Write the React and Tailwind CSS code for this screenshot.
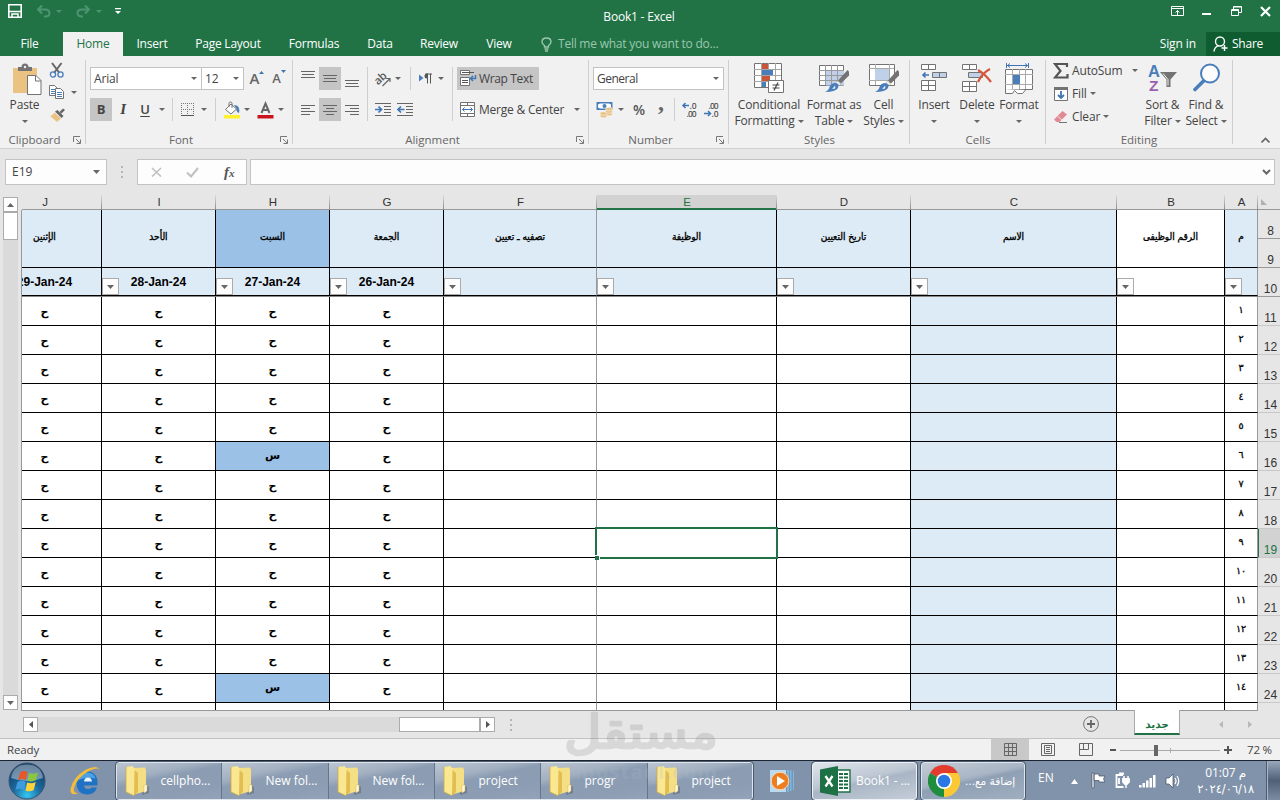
import React from 'react';
import clsx from 'clsx';

const Arrow = ({ className }) => (
  <svg width="6" height="3" viewBox="0 0 6 3" className={clsx('shrink-0', className || 'text-[#666]')}>
    <path d="M0 0h6L3 3z" fill="currentColor" />
  </svg>
);

const Sep = ({ className }) => <div className={clsx('w-px shrink-0 bg-[#cfcfcf]', className)} />;

const Slot = ({ className, children }) => (
  <div className={clsx('flex shrink-0 items-center justify-center', className)}>{children}</div>
);

/* ---------- small icons ---------- */

const Lines = ({ rows, y = 0 }) => (
  <svg width="14" height="16" viewBox="0 0 14 16" fill="#666">
    {rows.map(([x, w], i) => (
      <rect key={i} x={x} y={y + i * 3} width={w} height="1" />
    ))}
  </svg>
);

const LEFT = [[0, 14], [0, 9], [0, 14], [0, 9]];
const CENTER = [[0, 14], [3, 8], [0, 14], [3, 8]];
const RIGHT = [[0, 14], [5, 9], [0, 14], [5, 9]];
const THREE = [[0, 14], [1, 12], [0, 14]];

const PasteIcon = () => (
  <svg width="30" height="32" viewBox="0 0 30 32">
    <path d="M1 5h24v25H1z" fill="#eac282" />
    <path d="M6 8V4h3.500q0-3.500 3.500-3.500t3.500 3.500H20v4z" fill="#737373" />
    <circle cx="13" cy="4" r="1.200" fill="#f1f1f1" />
    <path d="M15.500 12.500h8.500l5 5v14H15.500z" fill="#fff" stroke="#737373" />
    <path d="M23.500 12.500v5.500H29" fill="none" stroke="#737373" />
  </svg>
);

const CutIcon = () => (
  <svg width="16" height="17" viewBox="0 0 16 17" fill="none">
    <path d="M3 1l7.500 10M12.500 1L5 11" stroke="#666" strokeWidth="2" />
    <circle cx="4" cy="12.500" r="2.600" stroke="#4a7ebb" strokeWidth="1.300" />
    <circle cx="11.500" cy="12.500" r="2.600" stroke="#4a7ebb" strokeWidth="1.300" />
  </svg>
);

const CopyIcon = () => (
  <svg width="16" height="15" viewBox="0 0 16 15" fill="#fff" stroke="#737373">
    <path d="M.5.5h5l3 3v7h-8z" />
    <path d="M2 4.500h4M2 6.500h4M2 8.500h4" stroke="#4a7ebb" />
    <path d="M6.500 3.500h5l3 3v7h-8z" />
    <path d="M8 7.500h5M8 9.500h5M8 11.500h5" stroke="#4a7ebb" />
  </svg>
);

const BrushIcon = () => (
  <svg width="17" height="15" viewBox="0 0 17 15">
    <path d="M10.500 4L14 .5 16 2l-3.500 3.500z" fill="#666" />
    <path d="M6 3.500L8.500 2l6 6-2 2z" fill="#666" />
    <path d="M5.500 4.500l6.500 6L8 14 1 8q3-1 4.500-3.500z" fill="#eac282" />
  </svg>
);

const BordersIcon = () => (
  <svg width="14" height="14" viewBox="0 0 14 14" fill="none" stroke="#777">
    <path d="M.5 0v12M6.500 0v12M12.500 0v12M0 .5h13M0 6.500h13" strokeDasharray="1 1" />
    <path d="M0 12.500h13" stroke="#555" />
  </svg>
);

const FillIcon = () => (
  <svg width="18" height="18" viewBox="0 0 18 18">
    <path d="M11 4q6.500 0 5 8-2.500-.5-3-5z" fill="#4a7ebb" />
    <path d="M2.500 8.500L8 3l5.500 5L8 13z" fill="#fff" stroke="#737373" />
    <path d="M6 6V2.500Q6 1 7.500 1T9 2.500V7" fill="none" stroke="#737373" />
    <path d="M1 14h16v3.500H1z" fill="#fff12b" />
  </svg>
);

const FontColorIcon = () => (
  <svg width="17" height="18" viewBox="0 0 17 18">
    <path d="M4.500 12L8.500 2.500 12.500 12M6 9h5" fill="none" stroke="#666" strokeWidth="2" />
    <path d="M.5 14h16v3.500H.5z" fill="#c9141c" />
  </svg>
);

const OrientationIcon = () => (
  <svg width="17" height="16" viewBox="0 0 17 16" className="overflow-visible">
    <text x="0" y="11" fontSize="11" fontWeight="600" fontFamily="Open Sans" fill="#5a5a5a" transform="rotate(-42 6 9)">ab</text>
    <path d="M7.500 15L14.500 8M11 7.500h4V11" fill="none" stroke="#666" strokeWidth="1.200" />
  </svg>
);

const ParagraphIcon = () => (
  <svg width="14" height="12" viewBox="0 0 14 12">
    <path d="M0 1.500L4.500 5 0 8.500z" fill="#4a7ebb" />
    <path d="M8.500 1v9.500M11.500 1v9.500M6.500 1H13" stroke="#555" fill="none" />
    <path d="M9 .5H8a2.500 2.500 0 0 0 0 5h1z" fill="#555" />
  </svg>
);

const IndentIcon = ({ flip }) => (
  <svg width="17" height="14" viewBox="0 0 17 14">
    <path d="M0 .5h16M9 3.500h7M9 6.500h7M9 9.500h7M0 12.500h16" stroke="#666" />
    {flip ? (
      <path d="M7.500 6.500H1.500M4 3.500l-3 3 3 3" fill="none" stroke="#3f74b5" strokeWidth="1.700" />
    ) : (
      <path d="M0 6.500h6M3.500 3.500l3 3-3 3" fill="none" stroke="#3f74b5" strokeWidth="1.700" />
    )}
  </svg>
);

const WrapIcon = () => (
  <svg width="17" height="17" viewBox="0 0 17 17" fill="none">
    <path d="M.5.500h9v4h-9zM.5 7.500h9v8h-9z" fill="#fff" stroke="#737373" />
    <path d="M2 2.500h12M2 10.500h6M2 12.500h6" stroke="#555" />
    <path d="M15.500 5v3.500h-4.500M13 6l-2.500 2.500L13 11" stroke="#3f74b5" strokeWidth="1.500" />
  </svg>
);

const MergeIcon = () => (
  <svg width="16" height="16" viewBox="0 0 16 16" fill="#fff" stroke="#737373">
    <path d="M.5.500h14v14H.5zM.5 3.500h14M.5 11.500h14M7.500.500v3M7.500 11.500v3" />
    <path d="M2.500 7.500h10M4.500 5.500l-2 2 2 2M10.500 5.500l2 2-2 2" fill="none" stroke="#3f74b5" />
  </svg>
);

const MoneyIcon = () => (
  <svg width="18" height="17" viewBox="0 0 18 17">
    <path d="M.5 1h16v8H.5z" fill="#4a7ebb" />
    <path d="M2 3.500L4 2.500h9l2 1v3l-2 1H4l-2-1z" fill="#fff" />
    <circle cx="8.500" cy="5" r="2" fill="#4a7ebb" />
    <g fill="#eac282" stroke="#f1f1f1" strokeWidth=".6">
      <ellipse cx="13" cy="13" rx="3.500" ry="1.800" />
      <ellipse cx="13" cy="10.500" rx="3.500" ry="1.800" />
      <ellipse cx="13" cy="8" rx="3.500" ry="1.800" />
      <ellipse cx="7.500" cy="15" rx="3.500" ry="1.800" />
      <ellipse cx="7.500" cy="12.500" rx="3.500" ry="1.800" />
    </g>
  </svg>
);

const DecimalIcon = ({ less }) => (
  <svg width="17" height="18" viewBox="0 0 17 18" fontFamily="Open Sans" fontSize="8.500" fontWeight="600" fill="#555" className="overflow-visible">
    <text x={less ? 4.5 : 7.500} y="8" textLength={less ? 10 : 7}>{less ? '.00' : '.0'}</text>
    <text x={less ? 7.500 : 4.5} y="16" textLength={less ? 7 : 10}>{less ? '.0' : '.00'}</text>
    {less ? (
      <path d="M0 12.500h6M4 10l2.500 2.500L4 15" fill="none" stroke="#3f74b5" strokeWidth="1.500" />
    ) : (
      <path d="M7 4.500H1M3.500 2L1 4.500 3.500 7" fill="none" stroke="#3f74b5" strokeWidth="1.500" />
    )}
  </svg>
);

/* ---------- large icons ---------- */

const ConditionalIcon = () => (
  <svg width="31" height="31" viewBox="0 0 31 31">
    <path d="M.5.500h27v24H.5z" fill="#fff" stroke="#737373" />
    <path d="M7.500 0v24M14.500 0v24M21.500 0v24M0 6.500h27M0 12.500h27M0 18.500h27" stroke="#a5a5a5" />
    <path d="M8 1h6v5H8zM8 13h8v5H8z" fill="#c8563c" />
    <path d="M8 7h11v5H8zM8 19h4v5H8z" fill="#4a7ebb" />
    <path d="M14.500 17.500h15v12h-15z" fill="#fff" stroke="#737373" />
    <path d="M18.500 22h7M18.500 25h7M24 19.500l-4 8" stroke="#444" strokeWidth="1.200" />
  </svg>
);

const Brush = () => (
  <g>
    <path d="M28.500 7L30 8.500v4L22 20.500l-3-3z" fill="#737373" />
    <path d="M18.500 18l3 3-1 1.500-3.500-3z" fill="#fff" stroke="#8a8a8a" strokeWidth=".5" />
    <path d="M16.500 20q4 1 2.500 5-2.500 4-13 4 4-2 4.500-5 1.500-4 6-4z" fill="#4a7ebb" />
    <path d="M13 25.500q2-1 3-3 1 2-.5 3.500z" fill="#e8eef6" />
  </g>
);

const FormatTableIcon = () => (
  <svg width="30" height="30" viewBox="0 0 30 30">
    <path d="M.5 2.500h24v20H.5z" fill="#fff" stroke="#737373" />
    <path d="M7 7.500h18v15H7z" fill="#bfd0e8" />
    <path d="M6.500 2v20M12.500 2v20M18.500 2v20M0 7.500h24M0 12.500h24M0 17.500h24" stroke="#999" />
    <Brush />
  </svg>
);

const CellStylesIcon = () => (
  <svg width="30" height="30" viewBox="0 0 30 30">
    <path d="M.5 1.500h25v21H.5z" fill="#fff" stroke="#737373" />
    <path d="M6.500 1v21M20.500 1v21M0 5.500h25M0 17.500h25" stroke="#aaa" />
    <path d="M6 6h14v11H6z" fill="#bfd0e8" />
    <Brush />
  </svg>
);

const InsertIcon = () => (
  <svg width="28" height="30" viewBox="0 0 28 30" fill="#fff" stroke="#737373">
    <path d="M1.500 1.500h14v5h-14zM8.500 1.500v5M1.500 17.500h14v10h-14zM8.500 17.500v10M1.500 22.500h14" />
    <path d="M12.500 9.500h14v5h-14zM19.500 9.500v5" fill="#bfd0e8" />
    <path d="M9 12H3M5.500 9.500L3 12l2.500 2.500" fill="none" stroke="#3f74b5" strokeWidth="1.600" />
  </svg>
);

const DeleteIcon = () => (
  <svg width="30" height="30" viewBox="0 0 30 30" fill="#fff" stroke="#737373">
    <path d="M.5 1.500h14v5H.5zM7.500 1.500v5M.5 18.500h14v10H.5zM7.500 18.500v10M.5 23.500h14" />
    <path d="M6.500 9.500h14v5h-14z" fill="#bfd0e8" />
    <path d="M16 7q7 4 13 12M28 6q-8 4-12 13" fill="none" stroke="#d3583c" strokeWidth="2.200" />
  </svg>
);

const FormatIcon = () => (
  <svg width="29" height="32" viewBox="0 0 29 32">
    <path d="M1.500 0v5M23.500 0v5M2 2.500h21M5 .5L2.500 2.500 5 4.500M20 .5l2.500 2L20 4.500" fill="none" stroke="#3f74b5" />
    <path d="M.5 6.500h27v20H.5z" fill="#fff" stroke="#737373" />
    <path d="M7.500 6v20M14.500 6v20M20.500 6v20M0 11.500h28M0 21.500h28" stroke="#aaa" />
    <path d="M8 12h7v9H8z" fill="#4a7ebb" />
    <path d="M.5 26v4.500h7l2-3 3 3h5l3-3.500" fill="#fff" stroke="#737373" />
  </svg>
);

const SortIcon = () => (
  <svg width="31" height="32" viewBox="0 0 31 32" fontFamily="Liberation Sans" fontWeight="bold" fontSize="16.500" className="overflow-visible">
    <text x="1" y="14" fill="#4a7ebb">A</text>
    <text x="2" y="28" fill="#9a5fae" fontSize="15.500">Z</text>
    <path d="M13 9h17l-6.500 7.500V24h-4v-7.500z" fill="#737373" />
    <path d="M16 10.500l5 6v6" fill="none" stroke="#f1f1f1" />
  </svg>
);

const FindIcon = () => (
  <svg width="29" height="30" viewBox="0 0 29 30" fill="none">
    <path d="M11.500 18L3 26.500" stroke="#4a7ebb" strokeWidth="3.600" strokeLinecap="round" />
    <circle cx="18" cy="10.500" r="9" fill="#fdfdfd" stroke="#4a7ebb" strokeWidth="2" />
  </svg>
);

const EraserIcon = () => (
  <svg width="15" height="14" viewBox="0 0 15 14">
    <path d="M6 12.500h8" stroke="#737373" />
    <path d="M1 9.500L9.500 1l4.500 3.500L6.500 12h-3z" fill="#e28a94" />
    <path d="M4.500 6l4.500 4" stroke="#f6dcdf" />
  </svg>
);

/* ---------- ribbon ---------- */

const Launcher = () => (
  <svg width="8" height="8" viewBox="0 0 8 8" fill="none" stroke="#777">
    <path d="M.5 6V.5H7M3 3l4 4M7.500 3.500v4h-4" />
  </svg>
);

const Group = ({ width, label, labelWidth, launcher, children }) => (
  <div className={clsx('flex shrink-0', width)}>
    <div className="flex flex-1 flex-col min-w-0">
      <div className="flex h-[76px]">{children}</div>
      <div className="flex h-4 items-center justify-between pr-1">
        <span className={clsx('shrink-0 text-center text-[11.5px] tracking-normal text-[#666]', labelWidth)}>{label}</span>
        {launcher && <Launcher />}
      </div>
    </div>
    <Sep className="my-1" />
  </div>
);

const BigButton = ({ width, icon, lines, arrow }) => (
  <div className={clsx('flex shrink-0 flex-col items-center whitespace-nowrap', width)}>
    <div className="flex h-[41px] items-start pt-[7px]">{icon}</div>
    <div className="h-4 leading-4">{lines[0]}</div>
    <div className="flex h-4 items-center gap-[3px] leading-4">
      {lines[1]}
      {arrow && <Arrow />}
    </div>
  </div>
);

const Combo = ({ width, children }) => (
  <div className={clsx('flex h-[23px] shrink-0 items-center justify-between border border-[#c3c3c3] bg-white pl-[3px] pr-1', width)}>
    <span>{children}</span>
    <Arrow />
  </div>
);

const Ribbon = () => (
  <div className="flex h-[93px] shrink-0 border-b border-[#d0d0d0] bg-[#f1f1f1] text-[12px] tracking-[-0.15px] text-[#444]">
    <Group width="w-[86px]" label="Clipboard" labelWidth="w-[69px]" launcher>
      <BigButton width="w-[49px]" icon={<div className="pl-[5px]"><PasteIcon /></div>} lines={['Paste', '']} arrow />
      <div className="flex flex-col pt-[3px]">
        <div className="flex h-[22px] items-center"><CutIcon /></div>
        <div className="flex h-[23px] items-center gap-[6px]"><CopyIcon /><Arrow /></div>
        <div className="flex h-[22px] items-center"><BrushIcon /></div>
      </div>
    </Group>

    <Group width="w-[207px]" label="Font" labelWidth="w-[190px]" launcher>
      <div className="flex flex-col gap-2 pl-1 pt-[11px]">
        <div className="flex h-[23px] items-center">
          <Combo width="w-[112px]">Arial</Combo>
          <Combo width="-ml-px w-[43px]">12</Combo>
          <Slot className="ml-[4px] w-[18px] items-start gap-0">
            <span className="text-[15px] font-semibold leading-[23px] text-[#666]">A</span>
            <svg width="5" height="3" className="mt-[4px]"><path d="M0 3h5L2.500 0z" fill="#3f74b5" /></svg>
          </Slot>
          <Slot className="ml-[5px] w-[16px] items-start">
            <span className="text-[13px] font-semibold leading-[25px] text-[#666]">A</span>
            <svg width="5" height="3" className="mt-[4px]"><path d="M0 0h5L2.500 3z" fill="#3f74b5" /></svg>
          </Slot>
        </div>
        <div className="flex h-[23px] items-center">
          <Slot className="h-[23px] w-[22px] bg-[#c5c5c5] text-[13px] font-bold">B</Slot>
          <Slot className="w-[22px] font-['Liberation_Serif',serif] text-[15px] font-bold italic">I</Slot>
          <Slot className="w-[22px] text-[13px] font-semibold underline underline-offset-2">U</Slot>
          <Slot className="w-[11px]"><Arrow /></Slot>
          <Sep className="ml-[5px] h-[23px]" />
          <Slot className="ml-[6px] w-[18px]"><BordersIcon /></Slot>
          <Slot className="w-[14px]"><Arrow /></Slot>
          <Sep className="ml-[4px] h-[23px]" />
          <Slot className="ml-[6px] w-[20px]"><FillIcon /></Slot>
          <Slot className="w-[10px]"><Arrow /></Slot>
          <Slot className="ml-[3px] w-[20px]"><FontColorIcon /></Slot>
          <Slot className="w-[12px]"><Arrow /></Slot>
        </div>
      </div>
    </Group>

    <Group width="w-[296px]" label="Alignment" labelWidth="w-[279px]" launcher>
      <div className="flex pl-1 pt-[11px]">
        <div className="grid h-[54px] grid-cols-[22px_22px_22px] grid-rows-[23px_23px] gap-y-2">
          <Slot><Lines rows={THREE} y={0} /></Slot>
          <Slot className="bg-[#c5c5c5]"><Lines rows={THREE} y={4} /></Slot>
          <Slot><Lines rows={THREE} y={9} /></Slot>
          <Slot><Lines rows={LEFT} y={3} /></Slot>
          <Slot className="bg-[#c5c5c5]"><Lines rows={CENTER} y={3} /></Slot>
          <Slot><Lines rows={RIGHT} y={3} /></Slot>
        </div>
        <Sep className="ml-1 h-[54px]" />
        <div className="flex w-[84px] flex-col gap-2">
          <div className="flex h-[23px] items-center">
            <Slot className="ml-[4px] w-[22px]"><OrientationIcon /></Slot>
            <Slot className="w-[7px]"><Arrow /></Slot>
            <Sep className="ml-[9px] h-[23px]" />
            <Slot className="ml-[4px] w-[22px]"><ParagraphIcon /></Slot>
            <Slot className="w-[8px]"><Arrow /></Slot>
          </div>
          <div className="flex h-[23px] items-center">
            <Slot className="ml-[4px] w-[22px]"><IndentIcon /></Slot>
            <Slot className="w-[22px]"><IndentIcon flip /></Slot>
          </div>
        </div>
        <Sep className="h-[54px]" />
        <div className="ml-1 flex flex-col gap-2 whitespace-nowrap">
          <div className="flex h-[23px] w-[82px] items-center gap-[2px] bg-[#c5c5c5] pl-[3px] tracking-[-0.35px]"><WrapIcon />Wrap Text</div>
          <div className="flex h-[23px] items-center pl-[3px]"><MergeIcon /><span className="ml-[3px] w-[95px] tracking-[-0.22px]">Merge &amp; Center</span><Arrow /></div>
        </div>
      </div>
    </Group>

    <Group width="w-[140px]" label="Number" labelWidth="w-[123px]" launcher>
      <div className="flex flex-col gap-2 pl-1 pt-[11px]">
        <Combo width="w-[131px] tracking-[-0.5px]">General</Combo>
        <div className="flex h-[23px] items-center">
          <Slot className="ml-[3px] w-[18px]"><MoneyIcon /></Slot>
          <Slot className="w-[13px]"><Arrow /></Slot>
          <Slot className="ml-[3px] w-[18px] text-[14px] font-semibold text-[#555]">%</Slot>
          <Slot className="ml-[3px] h-[23px] w-[20px] items-start font-['Liberation_Serif',serif] text-[24px] font-bold leading-[8px] text-[#666]">,</Slot>
          <Sep className="ml-[3px] h-[23px]" />
          <Slot className="ml-[7px] w-[17px]"><DecimalIcon /></Slot>
          <Slot className="ml-[5px] w-[17px]"><DecimalIcon less /></Slot>
        </div>
      </div>
    </Group>

    <Group width="w-[181px]" label="Styles" labelWidth="w-[181px]">
      <BigButton width="w-[80px]" icon={<ConditionalIcon />} lines={['Conditional', 'Formatting']} arrow />
      <BigButton width="w-[50px]" icon={<FormatTableIcon />} lines={['Format as', 'Table']} arrow />
      <BigButton width="w-[49px]" icon={<CellStylesIcon />} lines={['Cell', 'Styles']} arrow />
    </Group>

    <Group width="w-[136px]" label="Cells" labelWidth="w-[136px]">
      <BigButton width="w-[48px]" icon={<InsertIcon />} lines={['Insert', '']} arrow />
      <BigButton width="w-[38px]" icon={<DeleteIcon />} lines={['Delete', '']} arrow />
      <BigButton width="w-[46px]" icon={<FormatIcon />} lines={['Format', '']} arrow />
    </Group>

    <Group width="w-[187px]" label="Editing" labelWidth="w-[186px]">
      <div className="flex w-[94px] flex-col pl-[7px] pt-[3px]">
        <div className="flex h-[23px] items-center">
          <svg width="16" height="16" viewBox="0 0 16 16"><path d="M14 4V1H2l5.500 7L2 14.500h12.500V11" fill="none" stroke="#555" strokeWidth="2.200" /></svg>
          <span className="ml-[3px] w-[60px]">AutoSum</span>
          <Arrow />
        </div>
        <div className="flex h-[23px] items-center">
          <svg width="16" height="16" viewBox="0 0 16 16">
            <path d="M1.500 1.500h13v13h-13z" fill="#fff" stroke="#737373" />
            <path d="M1 1h14v3H1z" fill="#737373" />
            <path d="M8 5v7M5 9l3 3 3-3" fill="none" stroke="#3f74b5" strokeWidth="1.800" />
          </svg>
          <span className="ml-[3px] mr-[3px]">Fill</span>
          <Arrow />
        </div>
        <div className="flex h-[23px] items-center"><EraserIcon /><span className="ml-[4px] mr-[3px]">Clear</span><Arrow /></div>
      </div>
      <BigButton width="w-[45px]" icon={<SortIcon />} lines={['Sort &', 'Filter']} arrow />
      <BigButton width="w-[42px]" icon={<FindIcon />} lines={['Find &', 'Select']} arrow />
    </Group>

    <div className="flex flex-1 items-end justify-center pb-1 pl-[18px]">
      <svg width="9" height="7" viewBox="0 0 9 7"><path d="M.5 5.500l4-4 4 4" fill="none" stroke="#666" strokeWidth="1.700" /></svg>
    </div>
  </div>
);

/* ---------- title bar + tabs ---------- */

const TitleBar = () => (
  <div className="flex h-8 shrink-0 text-[12px] text-white">
    <div className="flex w-[500px] items-center pb-[10px] pl-2">
      <svg width="14" height="14" viewBox="0 0 14 14" fill="none" stroke="#fff">
        <path d="M.8.800h12.400v12.400H.8z" strokeWidth="1.600" />
        <path d="M1 7.500h12" strokeWidth="1.500" />
        <path d="M4 13v-3h6v3" strokeWidth="1.500" />
      </svg>
      <svg width="15" height="13" viewBox="0 0 15 13" fill="none" stroke="#4f9470" strokeWidth="2" className="ml-[14px]">
        <path d="M6 .5L2 4.500l4 4M2 4.500h7q4.500 0 4.500 3.500T9 11.500H8" />
      </svg>
      <Arrow className="ml-[5px] text-[#4f9470]" />
      <svg width="15" height="13" viewBox="0 0 15 13" fill="none" stroke="#4f9470" strokeWidth="2" className="ml-[14px]">
        <path d="M9 .5l4 4-4 4M13 4.500H6Q1.500 4.500 1.500 8T6 11.500h1" />
      </svg>
      <Arrow className="ml-[5px] text-[#4f9470]" />
      <svg width="6" height="6" viewBox="0 0 6 6" fill="#fff" className="ml-[13px]"><path d="M0 0h6v1.200H0zM0 3h6L3 6z" /></svg>
    </div>
    <div className="flex w-[278px] items-center justify-center pt-[2px] tracking-[-0.2px]">Book1 - Excel</div>
    <div className="flex flex-1 items-center justify-end pb-[10px] pr-[9px]">
      <svg width="13" height="10" viewBox="0 0 13 10" fill="none" stroke="#fff">
        <path d="M.5.500h12v9H.5zM.5 2.500h12M6.500 9V4.500M4.500 6.500l2-2 2 2" />
      </svg>
      <div className="ml-[18px] mt-[5px] h-[2px] w-[9px] bg-white" />
      <svg width="11" height="10" viewBox="0 0 11 10" fill="none" stroke="#fff" className="ml-[20px]">
        <path d="M.5 3.500h7v6h-7zM.5 4.500h7M2.500 3V.5h8v6H8M2.500 1h8" />
      </svg>
      <svg width="11" height="11" viewBox="0 0 11 11" stroke="#fff" strokeWidth="2.200" className="ml-[18px]"><path d="M1 1l9 9M10 1l-9 9" /></svg>
    </div>
  </div>
);

const TABS = [
  ['Insert', 'w-[58px]'],
  ['Page Layout', 'w-[94px]'],
  ['Formulas', 'w-[78px]'],
  ['Data', 'w-[54px]'],
  ['Review', 'w-[64px]'],
  ['View', 'w-[56px]'],
];

const TabBar = () => (
  <div className="flex h-6 shrink-0 items-center text-[12px] tracking-[-0.23px] text-white">
    <Slot className="w-[63px] pr-[4px]">File</Slot>
    <Slot className="h-6 w-[60px] bg-[#f1f1f1] text-[#217346]">Home</Slot>
    {TABS.map(([name, w]) => <Slot key={name} className={w}>{name}</Slot>)}
    <svg width="12" height="15" viewBox="0 0 12 15" fill="none" stroke="#9cc7ae" strokeWidth="1.400" className="ml-[14px]">
      <path d="M3.500 10V8.500Q1 7 1 4.800 1.200 1 5.500 1T10 4.800Q10 7 7.500 8.500V10zM3.500 12h4M4 14h3" />
    </svg>
    <span className="ml-[5px] text-[#9cc7ae]">Tell me what you want to do...</span>
    <div className="flex-1" />
    <span className="tracking-[-0.1px]">Sign in</span>
    <div className="ml-[10px] flex h-6 w-[74px] items-center bg-[#0e5c2f] pl-[7px]">
      <svg width="15" height="16" viewBox="0 0 15 16" fill="none" stroke="#fff" strokeWidth="1.400">
        <circle cx="7" cy="5.500" r="4.500" /><path d="M1 15.500Q1.500 11 5 9.800M11.500 9v6M8.500 12h6" />
      </svg>
      <span className="ml-1">Share</span>
    </div>
  </div>
);

const FormulaBar = () => (
  <div className="flex h-[46px] shrink-0 items-center text-[12px] text-[#444]">
    <div className="ml-[5px] flex h-[26px] w-[102px] items-center justify-between border border-[#c3c3c3] bg-[#fdfdfd] pl-[6px] pr-[6px]">
      <span>E19</span>
      <svg width="7" height="4"><path d="M0 0h7L3.500 4z" fill="#666" /></svg>
    </div>
    <div className="ml-[14px] flex flex-col gap-[3px]">
      <i className="h-[2px] w-[2px] bg-[#b5b5b5]" /><i className="h-[2px] w-[2px] bg-[#b5b5b5]" /><i className="h-[2px] w-[2px] bg-[#b5b5b5]" />
    </div>
    <div className="ml-[14px] flex h-[26px] w-[110px] items-center border border-[#c3c3c3] bg-[#fdfdfd] pl-[13px]">
      <svg width="11" height="10" stroke="#c0c0c0" strokeWidth="1.600"><path d="M1 1l9 8.500M10 1L1 9.500" /></svg>
      <svg width="13" height="11" fill="none" stroke="#c0c0c0" strokeWidth="2" className="ml-[24px]"><path d="M1 5.500l4 4L12 1" /></svg>
      <span className="ml-[25px] font-['Liberation_Serif',serif] text-[15px] font-bold italic leading-none text-[#555]">f<span className="text-[11px]">x</span></span>
    </div>
    <div className="ml-[3px] flex h-[26px] w-[1025px] items-center justify-end border border-[#c3c3c3] bg-[#fdfdfd] pr-[3px]">
      <svg width="9" height="7"><path d="M1 1l3.500 3.500L8 1" fill="none" stroke="#666" strokeWidth="2" /></svg>
    </div>
  </div>
);

/* ---------- worksheet (right to left sheet, drawn left to right) ---------- */

const COLS = [
  { id: 'J', w: 'w-[80px]', title: 'الإثنين', date: '29-Jan-24', day: true },
  { id: 'I', w: 'w-[114px]', title: 'الأحد', date: '28-Jan-24', day: true, filter: true },
  { id: 'H', w: 'w-[114px]', title: 'السبت', date: '27-Jan-24', day: true, filter: true },
  { id: 'G', w: 'w-[114px]', title: 'الجمعة', date: '26-Jan-24', day: true, filter: true },
  { id: 'F', w: 'w-[153px]', title: 'تصفيه ـ تعيين', filter: true },
  { id: 'E', w: 'w-[180px]', title: 'الوظيفة', filter: true },
  { id: 'D', w: 'w-[134px]', title: 'تاريخ التعيين', filter: true },
  { id: 'C', w: 'w-[206px]', title: 'الاسم', filter: true },
  { id: 'B', w: 'w-[108px]', title: 'الرقم الوظيفى', filter: true },
  { id: 'A', w: 'w-[33px]', title: 'م', filter: true },
];

const NUMERALS = ['١', '٢', '٣', '٤', '٥', '٦', '٧', '٨', '٩', '١٠', '١١', '١٢', '١٣', '١٤'];

const edge = (id) => (id === 'F' || id === 'A' ? 'border-r-[#999]' : 'border-r-black');

const FilterButton = () => (
  <div className="absolute bottom-0 left-0 flex h-[17px] w-[17px] items-center justify-center border border-[#ababab] bg-[#fdfdfd]">
    <svg width="7" height="4"><path d="M0 0h7L3.500 4z" fill="#666" /></svg>
  </div>
);

const Sheet = () => (
  <div className="flex h-[516px] shrink-0 overflow-hidden">
    <div className="flex w-[21px] shrink-0 flex-col items-start pl-[3px] pt-[2px]">
      <div className="flex h-[15px] w-[15px] items-center justify-center border border-[#ababab] bg-white">
        <svg width="7" height="4"><path d="M0 4h7L3.500 0z" fill="#666" /></svg>
      </div>
      <div className="h-[28px] w-[15px] border border-[#ababab] bg-white" />
      <div className="h-[455px] w-[15px] bg-[#dadada]" />
      <div className="flex h-[15px] w-[15px] items-center justify-center border border-[#ababab] bg-white">
        <svg width="7" height="4"><path d="M0 0h7L3.500 4z" fill="#666" /></svg>
      </div>
    </div>

    <div className="flex w-[1237px] shrink-0 flex-col font-['Liberation_Sans','DejaVu_Sans',sans-serif]">
      <div className="flex h-[15px] shrink-0 pl-px text-[11.5px] leading-[15px] text-[#333]">
        {COLS.map((c) => (
          <div key={c.id} className={clsx('flex shrink-0', c.w)}>
            <div className={clsx('flex flex-1 justify-center border-b pl-px', c.id === 'E' ? 'border-b-2 border-[#217346] bg-[#d2d2d2] text-[#217346]' : 'border-[#999]', c.id === 'J' && 'pr-[34px]')}>
              {c.id}
            </div>
            <div className="w-px bg-linear-to-b from-[#dcdcdc] to-[#888]" />
          </div>
        ))}
      </div>

      <div className="flex flex-1 flex-col border-b border-l border-[#999] bg-white text-black">
        <div className="flex h-[58px] shrink-0">
          {COLS.map((c) => (
            <div
              key={c.id}
              className={clsx('flex shrink-0 items-center justify-center border-b border-r border-b-black pb-[4px]', c.w, edge(c.id),
                c.id === 'H' ? 'bg-[#9bc1e6]' : c.id === 'B' ? 'bg-white' : 'bg-[#ddebf7]', c.id === 'J' && 'pr-[34px]')}
            >
              <span dir="rtl" className="whitespace-nowrap font-['DejaVu_Sans_Condensed','DejaVu_Sans'] text-[10px] tracking-[-0.2px] [-webkit-text-stroke:0.35px_black]">{c.title}</span>
            </div>
          ))}
        </div>

        <div className="flex h-[29px] shrink-0 border-b border-[#888]">
          {COLS.map((c) => (
            <div key={c.id} className={clsx('relative flex shrink-0 justify-end overflow-hidden border-b border-r border-b-black text-[12px] font-bold', c.w, edge(c.id), c.id === 'B' ? 'bg-white' : 'bg-[#ddebf7]')}>
              {c.day && <span className="w-[113px] shrink-0 text-center leading-[28px]">{c.date}</span>}
              {c.filter && <FilterButton />}
            </div>
          ))}
        </div>

        {NUMERALS.map((num, i) => (
          <div key={num} className="flex h-[29px] shrink-0">
            {COLS.map((c) => {
              const off = c.id === 'H' && (i === 5 || i === 13);
              return (
                <div key={c.id} className={clsx('relative flex shrink-0 justify-end border-b border-r border-b-black text-[11px] font-bold', "font-['DejaVu_Sans']", c.w, edge(c.id), off && 'bg-[#9bc1e6]', c.id === 'C' && 'bg-[#ddebf7]')}>
                  {c.day && <span className={clsx('h-[28px] w-[113px] shrink-0 text-center', off ? 'leading-[28px]' : 'leading-[31px]')}>{off ? 'س' : 'ح'}</span>}
                  {c.id === 'A' && <span className={clsx('w-full text-center text-[9.5px] font-normal leading-[26px] [-webkit-text-stroke:0.3px_black]', i > 8 && 'tracking-[1.5px]')}>{num}</span>}
                  {c.id === 'E' && i === 8 && (
                    <div className="absolute -left-[2px] -right-[2px] -top-[2px] -bottom-[2px] z-10 border-2 border-[#217346]">
                      <i className="absolute -bottom-[3px] -left-[2px] h-[5px] w-[5px] border-r border-t border-white bg-[#217346]" />
                    </div>
                  )}
                </div>
              );
            })}
          </div>
        ))}

        <div className="flex flex-1">
          {COLS.map((c) => (
            <div key={c.id} className={clsx('shrink-0 border-r', c.w, edge(c.id), c.id === 'C' && 'bg-[#ddebf7]')} />
          ))}
        </div>
      </div>
    </div>

    <div className="flex flex-1 flex-col font-['Liberation_Sans'] text-[12px] text-[#333]">
      <div className="flex h-[15px] shrink-0 items-end border-b border-[#999] pb-[4px] pl-[3px]">
        <svg width="6" height="6"><path d="M0 0v6h6z" fill="#b0b0b0" /></svg>
      </div>
      {Array.from({ length: 17 }, (_, i) => i + 8).map((n) => (
        <div
          key={n}
          className={clsx('flex h-[29px] shrink-0 items-end justify-center border-b leading-[13px]',
            n < 11 ? 'border-[#999]' : 'border-[#c8c8c8]',
            n === 19 ? '-ml-px border-l-2 border-l-[#217346] bg-[#d2d2d2] pl-[2px] text-[#217346]' : 'pl-[3px]')}
        >
          {n}
        </div>
      ))}
    </div>
  </div>
);

const SheetTabs = () => (
  <div className="flex h-[28px] shrink-0 items-start border-b border-[#c3c3c3]">
    <div className="ml-[23px] mt-[6px] flex h-[15px] w-[472px] bg-[#dadada]">
      <div className="flex w-[15px] items-center justify-center border border-[#ababab] bg-white">
        <svg width="4" height="7"><path d="M4 0v7L0 3.500z" fill="#555" /></svg>
      </div>
      <div className="flex-1" />
      <div className="w-[81px] border border-[#ababab] bg-white" />
      <div className="flex w-[15px] items-center justify-center border border-[#ababab] bg-white">
        <svg width="4" height="7"><path d="M0 0v7l4-3.500z" fill="#555" /></svg>
      </div>
    </div>
    <div className="ml-[15px] mt-[8px] flex flex-col gap-[3px]">
      <i className="h-[2px] w-[2px] bg-[#b5b5b5]" /><i className="h-[2px] w-[2px] bg-[#b5b5b5]" /><i className="h-[2px] w-[2px] bg-[#b5b5b5]" />
    </div>
    <svg width="16" height="16" viewBox="0 0 16 16" fill="none" stroke="#777" className="ml-[571px] mt-[5px]">
      <circle cx="8" cy="8" r="7.400" /><path d="M8 4v8M4 8h8" strokeWidth="1.800" stroke="#666" />
    </svg>
    <div className="-mt-px ml-[35px] flex h-[25px] w-[46px] items-center justify-center border-x border-b-2 border-x-[#aaa] border-b-[#217346] bg-white pt-[6px] font-['DejaVu_Sans'] text-[10.5px] font-bold text-[#217346]">
      جديد
    </div>
    <svg width="4" height="7" className="ml-[39px] mt-[10px]"><path d="M4 0v7L0 3.500z" fill="#b8b8b8" /></svg>
    <svg width="4" height="7" className="ml-[25px] mt-[10px]"><path d="M0 0v7l4-3.500z" fill="#b8b8b8" /></svg>
  </div>
);

const StatusBar = () => (
  <div className="flex h-[21px] shrink-0 items-center bg-[#f1f1f1] text-[11.5px] text-[#444]">
    <span className="ml-[7px] w-[984px] tracking-[-0.15px]">Ready</span>
    <Slot className="h-[21px] w-[38px] bg-[#c8c8c8]">
      <svg width="13" height="13" fill="none" stroke="#666"><path d="M.5.500h12v12H.5zM4.500 0v13M8.500 0v13M0 4.500h13M0 8.500h13" /></svg>
    </Slot>
    <Slot className="w-[38px]">
      <svg width="14" height="13" fill="none" stroke="#666"><path d="M.5.500h13v12H.5zM3.500 2.500h7v8h-7zM5 4.500h4M5 6.500h4M5 8.500h4" /></svg>
    </Slot>
    <Slot className="w-[38px]">
      <svg width="14" height="13" fill="none" stroke="#666"><path d="M.5.500h13v12H.5zM4.500 0v6.500M9.500 0v6.500M.5 6.500h9" /></svg>
    </Slot>
    <div className="ml-[5px] h-[2px] w-[6px] bg-[#555]" />
    <svg width="100" height="12" className="ml-[4px]">
      <path d="M0 6.500h100M50.500 4v5" stroke="#aaa" /><path d="M34 1h4v11h-4z" fill="#666" />
    </svg>
    <svg width="8" height="8" className="ml-[4px]"><path d="M4 0v8M0 4h8" stroke="#555" strokeWidth="2" /></svg>
    <span className="ml-[15px] whitespace-nowrap tracking-[-0.2px]">72 %</span>
  </div>
);

/* ---------- taskbar ---------- */

const Folder = () => (
  <svg width="24" height="32" viewBox="0 0 24 32" className="shrink-0">
    <path d="M17 30l7-2v-6l-5-4z" fill="#4c5a6d" opacity=".45" />
    <path d="M8 3l12-.5 1 2.500v21l-10 3z" fill="#f5df84" />
    <path d="M1 2l6.500-1 2.500 3v24l-1.500 2.500L1 27z" fill="#f9e792" />
    <path d="M9.500 5L13 8v19l-4 3.500z" fill="#e2bd4f" />
    <path d="M19 20h3v6l-3 2z" fill="#fff8dc" stroke="#d9b64e" strokeWidth=".5" />
    <path d="M1 2v25l7.500 3.500" fill="none" stroke="#d0aa3f" strokeWidth=".8" />
  </svg>
);

const StartOrb = () => (
  <svg width="38" height="38" viewBox="0 0 38 38">
    <defs>
      <radialGradient id="orb" cx=".5" cy=".9" r=".85">
        <stop offset="0" stopColor="#35c7f2" />
        <stop offset=".45" stopColor="#1c6a9e" />
        <stop offset="1" stopColor="#123a63" />
      </radialGradient>
    </defs>
    <circle cx="19" cy="19" r="18" fill="url(#orb)" stroke="#3b5573" />
    <path d="M3 16Q5 2.500 19 2.500T35 16Q19 22 3 16z" fill="#fff" opacity=".38" />
    <path d="M12 10.500q4-2.500 7.500-.5L18 18q-4-2-8 .3z" fill="#e8572a" />
    <path d="M21 11q4.500 2 9-.8L28 18q-4 2.500-8.500.7z" fill="#8cc63e" />
    <path d="M9.500 20q4-2.300 8.200 0l-1.700 8q-4-2.300-8.500-.2z" fill="#3f9be0" />
    <path d="M19.200 20.500q4.300 1.800 8.500-.5l-2 8q-4 2.500-8.200.4z" fill="#ffd23a" />
  </svg>
);

const ExplorerIcon = () => (
  <svg width="32" height="32" viewBox="0 0 32 32" fill="none">
    <path d="M28.500 20.500H15q.5 3.500 4 3.500 2.500 0 3.500-1.500h5.500Q25.500 29.500 18.500 29.500 8 29.500 7.500 18 8 6.500 18.500 6.500 29.500 7 28.500 20.500z" fill="#1f72c4" />
    <path d="M9 15q2-7 9-7.500 7 0 8.500 6-8-2-17.500 1.500z" fill="#63b7f0" opacity=".7" />
    <path d="M15 16.500q.5-4 4-4t4 4z" fill="#eaf4fc" />
    <path d="M31 4.500Q28-.5 17 4.500 4 12 1.500 24q-.5 8 8 4-5.500.5-4.500-5Q8 13 19 6.500q8-4.500 12-2z" fill="#f3bd3a" />
  </svg>
);

const TASKS = [
  ['cellpho...', 'w-[105px]'],
  ['New fol...', 'w-[107px]'],
  ['New fol...', 'w-[106px]'],
  ['project', 'w-[106px]'],
  ['progr', 'w-[107px]'],
  ['project', 'w-[104px]'],
];

const Taskbar = () => (
  <div className="flex h-10 shrink-0 items-center border-t border-[#1c2531] bg-[#8193ab] text-[12px] text-white">
    <Slot className="w-[53px]"><StartOrb /></Slot>
    <Slot className="w-[63px]"><ExplorerIcon /></Slot>
    <div className="flex h-[38px] overflow-hidden rounded-[3px] border border-[#dfe5ec] outline outline-[#4c5a6d]">
      {TASKS.map(([name, w], i) => (
        <div key={i} className={clsx('flex shrink-0 items-center bg-[linear-gradient(168deg,#bcc6d2_0%,#a3b0c1_30%,#8c9db3_42%,#8b9cb3_70%,#93a3b8_100%)] pl-[8px]', i < 5 && 'border-r border-[#65758c]', w)}>
          <Folder />
          <span className="ml-[11.5px] whitespace-nowrap">{name}</span>
        </div>
      ))}
    </div>
    <Slot className="w-[59px]">
      <svg width="28" height="26" viewBox="0 0 28 26">
        <path d="M1 2h16v22H1z" fill="#b9dbf2" />
        <path d="M18 2h2v22h-2zM21 2h1.500v21H21zM24 3h1v19h-1z" fill="#7ab8e4" />
        <circle cx="11" cy="13" r="8.800" fill="#ee7d22" stroke="#fbd6ae" />
        <path d="M8 8v10l8-5z" fill="#fff" />
      </svg>
    </Slot>
    <div className="flex h-[38px] w-[105px] shrink-0 items-center rounded-[3px] border border-[#eef2f6] bg-[linear-gradient(168deg,#dfe5eb_0%,#bcc6d2_45%,#a9b5c5_52%,#c4cdd8_100%)] pl-[7px] outline outline-[#4c5a6d]">
      <svg width="31" height="30" viewBox="0 0 31 30" className="shrink-0">
        <path d="M16 4h14v22H16z" fill="#fff" stroke="#1e7145" strokeWidth="1.400" />
        <path d="M19 8h4M24 8h4M19 11.500h4M24 11.500h4M19 15h4M24 15h4M19 18.500h4M24 18.500h4M19 22h4M24 22h4" stroke="#1e7145" strokeWidth="2" />
        <path d="M0 3.500L18 0v30L0 26.500z" fill="#1e7145" />
        <path d="M5.500 10l7 10.500M12.500 10l-7 10.500" stroke="#fff" strokeWidth="2.300" />
      </svg>
      <span className="ml-[5px] whitespace-nowrap tracking-[-0.1px]">Book1 - ...</span>
    </div>
    <div className="ml-[4px] flex h-[38px] w-[104px] shrink-0 items-center rounded-[3px] border border-[#dfe5ec] bg-[linear-gradient(168deg,#c3ccd7_0%,#a9b5c5_42%,#8fa0b5_50%,#a0aebf_100%)] pl-[6px] outline outline-[#4c5a6d]">
      <svg width="32" height="32" viewBox="0 0 32 32" className="shrink-0">
        <path d="M16 16L2.100 8A16 16 0 0 1 29.900 8z" fill="#e33b2e" />
        <path d="M16 16L29.900 8A16 16 0 0 1 16 32z" fill="#fcc934" />
        <path d="M16 16V32A16 16 0 0 1 2.100 8z" fill="#1e8e3e" />
        <path d="M16 8h14.500L16 32l7-12z" fill="#fcc934" />
        <circle cx="16" cy="16" r="8" fill="#fff" />
        <circle cx="16" cy="16" r="6.300" fill="#2b78e4" />
      </svg>
      <span dir="rtl" className="ml-[5px] whitespace-nowrap pt-[2px] font-['DejaVu_Sans'] text-[10.5px] tracking-[-0.2px]">إضافة مع...</span>
    </div>
    <span className="ml-[13px] pb-[5px]">EN</span>
    <svg width="7" height="5" className="ml-[17px] mt-[2px]"><path d="M0 5h7L3.500 0z" fill="#fff" /></svg>
    <svg width="16" height="17" viewBox="0 0 16 17" className="ml-[13px]" fill="#fff" stroke="#3f4d60" strokeWidth=".7">
      <path d="M1 1h2v15H1zM3 2h5v2h6l-1.500 3L14 10H8V8.500H3z" />
    </svg>
    <svg width="16" height="17" viewBox="0 0 16 17" className="ml-[8px]" fill="none" stroke="#fff" strokeWidth="1.800">
      <path d="M8 3V1.500H5V3M8 3H1.500v12h7M4 6v6" /><path d="M9 4v3M13 4v3M11 12v4" strokeWidth="1.500" /><path d="M8 7h6v3l-2 2h-2l-2-2z" fill="#fff" />
    </svg>
    <svg width="17" height="14" viewBox="0 0 17 14" className="ml-[8px]" fill="#fff">
      <path d="M0 11h2.500v2.500H0zM3.500 9H6v4.500H3.500zM7 6.500h2.500v7H7zM10.500 4H13v9.500h-2.500zM14 1h2.500v12.500H14z" />
    </svg>
    <svg width="15" height="16" viewBox="0 0 15 16" className="ml-[9px]">
      <path d="M1 5h3l4-4v14l-4-4H1z" fill="#fff" stroke="#3f4d60" strokeWidth=".7" />
      <path d="M10 5q2 3 0 6M12 3q3.500 5 0 10" fill="none" stroke="#fff" strokeWidth="1.200" />
    </svg>
    <div className="ml-[13px] flex w-[66px] flex-col items-center text-[12px] leading-[17px]" dir="rtl">
      <span className="tracking-[-0.4px]">م <bdi dir="ltr">01:07</bdi></span>
      <span dir="ltr" className="whitespace-nowrap font-['DejaVu_Sans'] text-[11.5px]">٢٠٢٤/٠٦/١٨</span>
    </div>
    <div className="flex-1" />
    <div className="h-[39px] w-[14px] border-l border-[#4d5b70] bg-linear-to-b from-[#9aa8ba] via-[#506078] to-[#7c8ca3] shadow-[inset_1px_0_0_#a9b6c7]" />
  </div>
);

const Watermark = () => (
  <div className="pointer-events-none absolute left-[561px] top-[706px] opacity-20">
    <svg width="160" height="80" viewBox="0 0 160 80">
      <text x="80" y="42" textAnchor="middle" direction="rtl" fontFamily="DejaVu Sans" fontSize="46" textLength="154" lengthAdjust="spacingAndGlyphs" fill="#777" stroke="#777" strokeWidth="2.500" strokeLinejoin="round">مستقل</text>
      <text x="14" y="73" fontFamily="Open Sans" fontWeight="bold" fontSize="20" textLength="142" fill="#a9bccb">mostaql.com</text>
    </svg>
  </div>
);

export default function App() {
  return (
    <div className="relative flex h-[800px] w-[1280px] flex-col overflow-hidden bg-[#e6e6e6] font-['Open_Sans','DejaVu_Sans',sans-serif] leading-normal">
      <div className="flex shrink-0 flex-col bg-[#217346]">
        <TitleBar />
        <TabBar />
      </div>
      <Ribbon />
      <FormulaBar />
      <Sheet />
      <SheetTabs />
      <StatusBar />
      <Taskbar />
      <Watermark />
    </div>
  );
}
